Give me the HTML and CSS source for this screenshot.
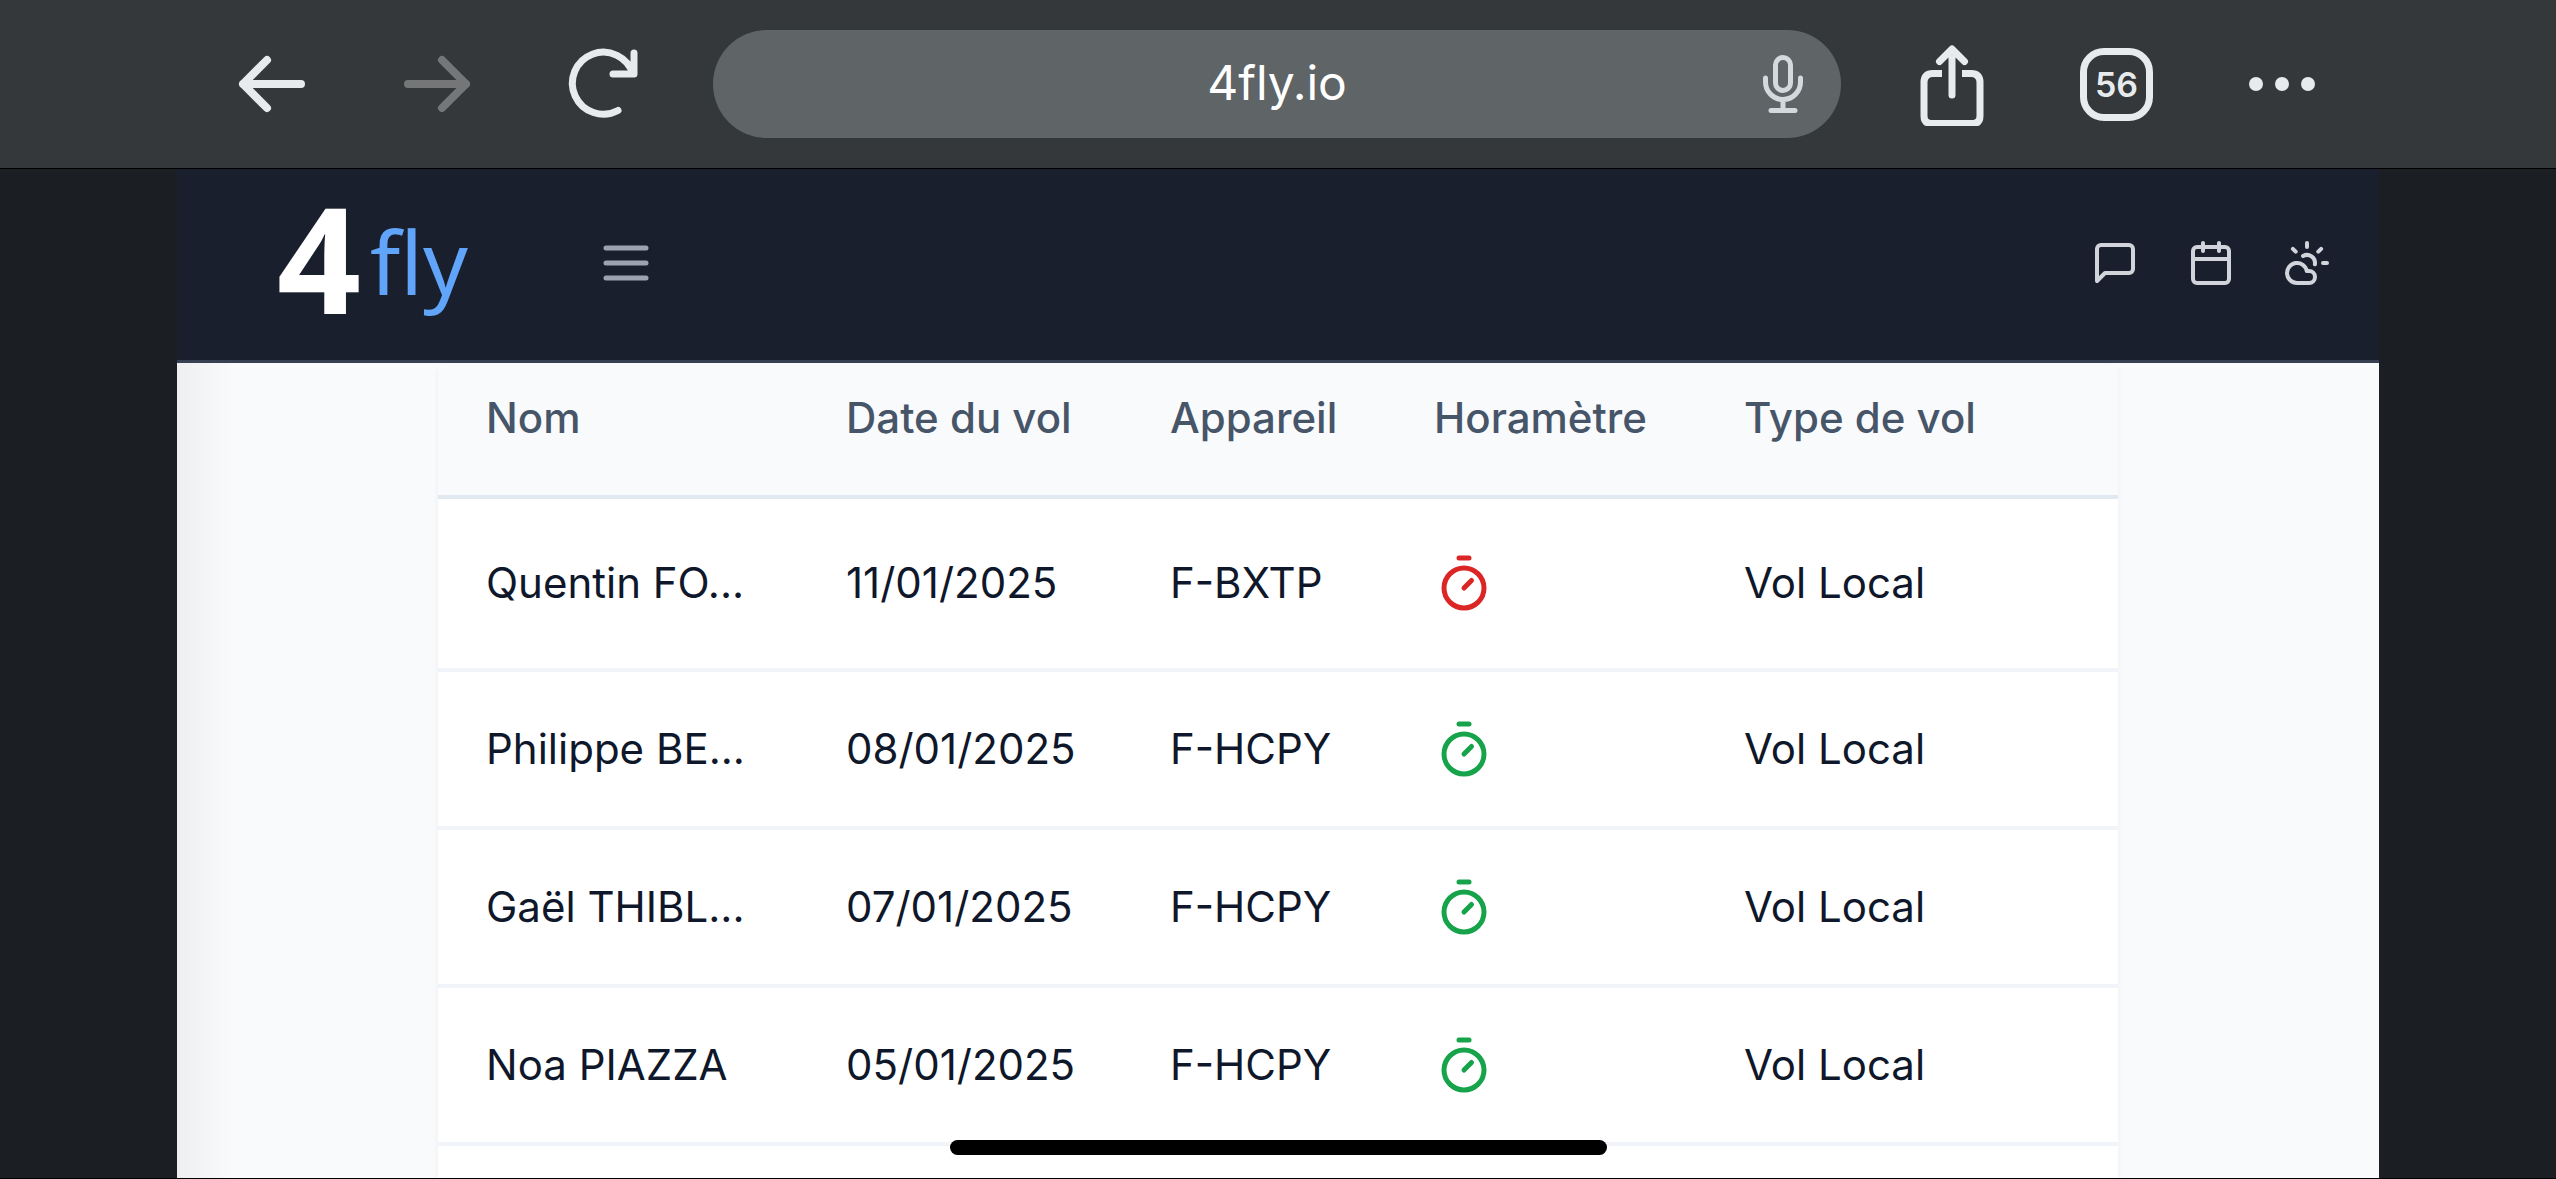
FILE: index.html
```html
<!DOCTYPE html>
<html lang="fr">
<head>
    <meta charset="UTF-8">
    <meta name="viewport" content="width=device-width, initial-scale=1.0">
    <title>4fly</title>
    <link rel="stylesheet" href="styles.css">
</head>
<body>

    <!-- Shared icon -->
    <svg class="sprite" aria-hidden="true">
        <symbol id="timer" viewBox="0 0 24 24">
            <line x1="10" y1="2" x2="14" y2="2" />
            <line x1="12" y1="14" x2="15" y2="11" />
            <circle cx="12" cy="14" r="8" />
        </symbol>
    </svg>

    <!-- Browser toolbar -->
    <div class="toolbar">
        <div class="toolbar-group">
            <button class="tool" aria-label="Retour">
                <svg class="tool-icon arrow" viewBox="0 0 84 84"><path d="M70 42H12M36 18L12 42l24 24" /></svg>
            </button>
            <button class="tool" aria-label="Suivant" disabled>
                <svg class="tool-icon arrow" viewBox="0 0 84 84"><path d="M12 42h58M46 18l24 24-24 24" /></svg>
            </button>
            <button class="tool" aria-label="Actualiser">
                <svg class="tool-icon" viewBox="0 0 84 84"><path d="M57 68.500A31 31 0 1 1 72 32M73 11v21H52" /></svg>
            </button>
        </div>
        <div class="address">
            <input class="address-input" type="text" value="4fly.io" aria-label="Adresse">
            <button class="mic" aria-label="Recherche vocale">
                <svg class="mic-icon" viewBox="0 0 40 60"><rect x="12.500" y="3.500" width="15" height="33" rx="7.500" /><path d="M2.500 24v4a17.500 17.500 0 0 0 35 0v-4M20 46v10M8 56.500h24" /></svg>
            </button>
        </div>
        <div class="toolbar-group">
            <button class="tool" aria-label="Partager">
                <svg class="tool-icon" viewBox="0 0 84 84"><path d="M42 53V8M29.500 19.500L42 7l12.500 12.500" /><path class="butt" d="M32 31.500h-9q-9 0-9 9v33.500q0 7.500 7.500 7.500h41q7.500 0 7.500-7.500V40.500q0-9-9-9h-9" /></svg>
            </button>
            <button class="tool" aria-label="Onglets"><span class="tab-count">56</span></button>
            <button class="tool" aria-label="Menu">
                <svg class="tool-icon dots" viewBox="0 0 84 84"><circle cx="16" cy="42" r="7" /><circle cx="42" cy="42" r="7" /><circle cx="68" cy="42" r="7" /></svg>
            </button>
        </div>
    </div>

    <div class="page">
        <header class="header">
            <div class="header-left">
                <a class="logo" href="#"><span class="logo-four">4</span><span class="logo-fly">fly</span></a>
                <button class="icon-button menu" aria-label="Ouvrir le menu">
                    <svg class="icon icon-large" viewBox="0 0 24 24"><path d="M4 6h16M4 12h16M4 18h16" /></svg>
                </button>
            </div>
            <nav class="header-right">
                <a class="icon-button" href="#" aria-label="Messages">
                    <svg class="icon" viewBox="0 0 24 24"><path d="M21 15a2 2 0 0 1-2 2H7l-4 4V5a2 2 0 0 1 2-2h14a2 2 0 0 1 2 2z" /></svg>
                </a>
                <a class="icon-button" href="#" aria-label="Calendrier">
                    <svg class="icon" viewBox="0 0 24 24"><path d="M8 2v4M16 2v4M3 10h18" /><rect x="3" y="4" width="18" height="18" rx="2" /></svg>
                </a>
                <a class="icon-button" href="#" aria-label="Météo">
                    <svg class="icon" viewBox="0 0 24 24"><path d="M12 2v2M4.930 4.930l1.410 1.410M20 12h2M19.070 4.930l-1.410 1.410M15.947 12.650a4 4 0 0 0-5.925-4.128M13 22H7a5 5 0 1 1 4.900-6H13a3 3 0 0 1 0 6Z" /></svg>
                </a>
            </nav>
        </header>

        <main class="content">
            <div class="card">
                <table class="flights">
                    <thead>
                        <tr>
                            <th class="col-name">Nom</th>
                            <th class="col-date">Date du vol</th>
                            <th class="col-plane">Appareil</th>
                            <th class="col-hour">Horamètre</th>
                            <th>Type de vol</th>
                        </tr>
                    </thead>
                    <tbody>
                        <tr class="tall">
                            <td>Quentin FO...</td>
                            <td>11/01/2025</td>
                            <td>F-BXTP</td>
                            <td><svg class="timer late" role="img" aria-label="À saisir"><use href="#timer" /></svg></td>
                            <td>Vol Local</td>
                        </tr>
                        <tr>
                            <td>Philippe BE...</td>
                            <td>08/01/2025</td>
                            <td>F-HCPY</td>
                            <td><svg class="timer" role="img" aria-label="Saisi"><use href="#timer" /></svg></td>
                            <td>Vol Local</td>
                        </tr>
                        <tr>
                            <td>Gaël THIBL...</td>
                            <td>07/01/2025</td>
                            <td>F-HCPY</td>
                            <td><svg class="timer" role="img" aria-label="Saisi"><use href="#timer" /></svg></td>
                            <td>Vol Local</td>
                        </tr>
                        <tr>
                            <td>Noa PIAZZA</td>
                            <td>05/01/2025</td>
                            <td>F-HCPY</td>
                            <td><svg class="timer" role="img" aria-label="Saisi"><use href="#timer" /></svg></td>
                            <td>Vol Local</td>
                        </tr>
                    </tbody>
                </table>
            </div>
        </main>
    </div>

    <div class="home-bar"></div>

</body>
</html>
```
FILE: styles.css
```css
* {
    box-sizing: border-box;
}
body {
    margin: 0;
    min-height: 100vh;
    display: flex;
    flex-direction: column;
    overflow: hidden;
    background: #1b1e22;
    border-bottom: 1px solid #000;
    font-family: Inter, "Liberation Sans", sans-serif;
    color: #0f172a;
}
button {
    padding: 0;
    border: 0;
    background: none;
    color: inherit;
    font: inherit;
}
svg {
    display: block;
    fill: none;
    stroke: currentColor;
    stroke-width: 2;
    stroke-linecap: round;
    stroke-linejoin: round;
}
.sprite {
    position: absolute;
    width: 0;
    height: 0;
}

/* Browser toolbar */
.toolbar {
    display: flex;
    align-items: center;
    gap: 28px;
    padding: 30px 192px 30px 190px;
    background: #34383a;
    border-bottom: 1px solid #000;
    color: #e8ebee;
}
.toolbar-group {
    display: flex;
}
.tool {
    display: flex;
    align-items: center;
    justify-content: center;
    width: 165px;
}
.tool:disabled {
    color: #757678;
}
.tool-icon {
    width: 84px;
    height: 84px;
    stroke-width: 7;
}
.arrow {
    stroke-width: 8;
}
.butt {
    stroke-linecap: butt;
}
.dots {
    fill: currentColor;
    stroke: none;
}
.tab-count {
    display: flex;
    align-items: center;
    justify-content: center;
    width: 73px;
    height: 73px;
    border: 7px solid;
    border-radius: 24px;
    font-size: 34px;
    font-weight: 600;
}
.address {
    flex: 1;
    position: relative;
    height: 108px;
}
.address-input {
    width: 100%;
    height: 100%;
    padding: 0 96px 4px;
    border: 0;
    border-radius: 54px;
    background: #5f6467;
    color: #fff;
    font: 400 48px Inter, "Liberation Sans", sans-serif;
    text-align: center;
}
.mic {
    position: absolute;
    top: 24px;
    right: 38px;
    color: #d5d8dd;
}
.mic-icon {
    width: 40px;
    height: 60px;
    stroke-width: 5;
}

/* Page */
.page {
    flex: 1;
    display: flex;
    flex-direction: column;
    margin: 0 177px;
    background: #f9fafc;
}
.header {
    display: flex;
    align-items: center;
    justify-content: space-between;
    height: 194px;
    padding: 0 48px 3px 100px;
    background: #1a1f2e;
    border-bottom: 3px solid #374151;
}
.header-left,
.header-right {
    display: flex;
    align-items: center;
}
.header-right {
    gap: 48px;
    color: #d1d5db;
}
.logo {
    display: flex;
    align-items: center;
    gap: 9px;
    color: #fff;
    font-family: "Noto Sans", "Open Sans", sans-serif;
    font-variant-ligatures: none;
    text-decoration: none;
}
.logo-four {
    padding-bottom: 12px;
    font-size: 147px;
    font-weight: 700;
    line-height: 160px;
}
.logo-fly {
    padding-bottom: 4px;
    font-size: 88px;
    color: #60a5fa;
}
.icon-button {
    display: block;
    color: inherit;
}
.menu {
    margin-left: 128px;
    color: #9ca3af;
}
.icon {
    width: 48px;
    height: 48px;
}
.icon-large {
    width: 60px;
    height: 60px;
}

/* Flight list */
.content {
    flex: 1;
    display: flex;
    padding: 0 261px;
    background: linear-gradient(to right, #eeeff0, #f9fafc 56px);
}
.card {
    flex: 1;
    background: #fff;
    border-radius: 8px 8px 0 0;
    box-shadow: 0 3px 6px rgba(0, 0, 0, 0.05);
}
.flights {
    width: 100%;
    table-layout: fixed;
    border-collapse: separate;
    border-spacing: 0;
    font-size: 42px;
    line-height: 60px;
}
.flights th,
.flights td {
    padding: 47px 48px;
    border-bottom: 4px solid #f1f5f9;
    text-align: left;
    white-space: nowrap;
}
.flights th {
    padding: 25px 48px 47px;
    background: #f9fafc;
    border-bottom-color: #e2e8f0;
    color: #475569;
    font-weight: 500;
}
.flights .tall td {
    padding: 54px 48px 55px;
}
.flights .col-name {
    width: 360px;
}
.flights .col-date {
    width: 324px;
}
.flights .col-plane {
    width: 264px;
}
.flights .col-hour {
    width: 310px;
}
.timer {
    width: 60px;
    height: 60px;
    color: #16a34a;
}
.late {
    color: #dc2626;
}

.home-bar {
    position: fixed;
    bottom: 24px;
    left: 50%;
    width: 657px;
    height: 15px;
    margin-left: -328px;
    border-radius: 8px;
    background: #000;
}
```
